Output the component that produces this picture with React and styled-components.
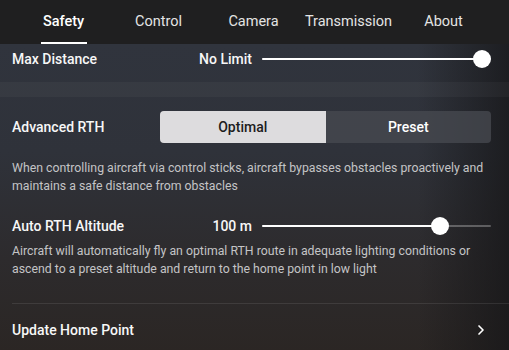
import React from 'react';
import styled, { createGlobalStyle } from 'styled-components';
import { ChevronRight } from 'lucide-react';

const GlobalStyle = createGlobalStyle`
  html, body {
    margin: 0;
    padding: 0;
    background: #1e1e1f;
  }
  * {
    box-sizing: border-box;
  }
  body {
    font-family: Roboto, "Liberation Sans", sans-serif;
    -webkit-font-smoothing: antialiased;
  }
`;

const Page = styled.div`
  width: 509px;
  height: 350px;
  overflow: hidden;
  display: flex;
  flex-direction: column;
  background: #1e1e1f;
`;

const TabBar = styled.div`
  height: 44px;
  flex-shrink: 0;
  display: flex;
  padding: 0 18px 0 16px;
  background: #1f1f20;
`;

const Tab = styled.div`
  position: relative;
  width: 95px;
  display: flex;
  align-items: center;
  justify-content: center;
  padding-bottom: 2px;
  font-size: 14.5px;
  font-weight: ${({ active }) => (active ? 500 : 400)};
  color: ${({ active }) => (active ? '#ffffff' : '#e4e4e4')};

  &::after {
    content: '';
    display: ${({ active }) => (active ? 'block' : 'none')};
    position: absolute;
    bottom: 0;
    left: 50%;
    transform: translateX(-50%);
    width: 46px;
    height: 2px;
    background: #ffffff;
  }
`;

const Content = styled.div`
  flex: 1;
  display: flex;
  flex-direction: column;
  background:
    linear-gradient(to right, rgba(20, 20, 22, 0) 82%, rgba(22, 22, 24, 0.75) 100%),
    linear-gradient(to bottom, #30343d 0%, #2f323a 35%, #2d2b2d 70%, #2b2624 100%);
`;

const Row = styled.div`
  display: grid;
  grid-template-columns: 1fr auto 229px;
  column-gap: 10px;
  align-items: center;
  height: ${({ h }) => h}px;
  margin-top: ${({ mt }) => mt || 0}px;
  padding: 0 18px 0 12px;
`;

const Label = styled.div`
  font-size: 14px;
  font-weight: 500;
  color: #f7f7f7;
`;

const Value = styled.div`
  font-size: 14px;
  font-weight: 500;
  color: #f7f7f7;
  text-align: right;
`;

const Track = styled.div`
  position: relative;
  height: 18px;
  display: flex;
  align-items: center;
`;

const TrackLine = styled.div`
  position: absolute;
  left: 0;
  right: 0;
  height: 2px;
  border-radius: 1px;
  background: rgba(255, 255, 255, 0.28);
`;

const TrackFill = styled.div`
  position: absolute;
  left: 0;
  height: 2px;
  border-radius: 1px;
  background: #ffffff;
`;

const Knob = styled.div`
  position: absolute;
  top: 0;
  width: 18px;
  height: 18px;
  border-radius: 50%;
  background: #ffffff;
  transform: translateX(-9px);
`;

const Band = styled.div`
  height: 15px;
  margin-top: 8px;
  background: rgba(255, 255, 255, 0.035);
`;

const SegRow = styled.div`
  display: flex;
  align-items: center;
  padding: 14px 18px 0 12px;
`;

const SegLabel = styled(Label)`
  width: 148px;
`;

const Segmented = styled.div`
  flex: 1;
  height: 32px;
  display: flex;
  border-radius: 4px;
  overflow: hidden;
  background: rgba(72, 75, 82, 0.75);
`;

const Segment = styled.div`
  flex: 1;
  display: flex;
  align-items: center;
  justify-content: center;
  font-size: 14px;
  font-weight: 500;
  color: ${({ active }) => (active ? '#1c1c1d' : '#ffffff')};
  background: ${({ active }) => (active ? '#dddcde' : 'transparent')};
`;

const Desc = styled.p`
  margin: 0;
  padding: ${({ pad }) => pad};
  font-size: 12.3px;
  line-height: 18px;
  color: #c4c4c6;
`;

const Divider = styled.div`
  height: 1px;
  margin: ${({ mt }) => mt}px 0 0 12px;
  background: rgba(255, 255, 255, 0.09);
`;

const LinkRow = styled.div`
  display: flex;
  align-items: center;
  justify-content: space-between;
  height: 48px;
  padding: 3px 20px 0 12px;
  color: #ffffff;
`;

function Slider({ value }) {
  const pos = `calc(9px + (100% - 18px) * ${value})`;
  return (
    <Track>
      <TrackLine />
      <TrackFill style={{ width: pos }} />
      <Knob style={{ left: pos }} />
    </Track>
  );
}

const tabs = ['Safety', 'Control', 'Camera', 'Transmission', 'About'];

export default function App() {
  return (
    <Page>
      <GlobalStyle />
      <TabBar>
        {tabs.map((t) => (
          <Tab key={t} active={t === 'Safety'}>
            {t}
          </Tab>
        ))}
      </TabBar>
      <Content>
        <Row h={30}>
          <Label>Max Distance</Label>
          <Value>No Limit</Value>
          <Slider value={1} />
        </Row>
        <Band />
        <SegRow>
          <SegLabel>Advanced RTH</SegLabel>
          <Segmented>
            <Segment active>Optimal</Segment>
            <Segment>Preset</Segment>
          </Segmented>
        </SegRow>
        <Desc pad="16px 18px 0 12px">
          When controlling aircraft via control sticks, aircraft bypasses obstacles proactively and
          maintains a safe distance from obstacles
        </Desc>
        <Row h={26} mt={18}>
          <Label>Auto RTH Altitude</Label>
          <Value>100 m</Value>
          <Slider value={0.8} />
        </Row>
        <Desc pad="3px 18px 0 12px">
          Aircraft will automatically fly an optimal RTH route in adequate lighting conditions or
          ascend to a preset altitude and return to the home point in low light
        </Desc>
        <Divider mt={25} />
        <LinkRow>
          <Label>Update Home Point</Label>
          <ChevronRight size={16} strokeWidth={2.5} color="#ffffff" />
        </LinkRow>
      </Content>
    </Page>
  );
}
